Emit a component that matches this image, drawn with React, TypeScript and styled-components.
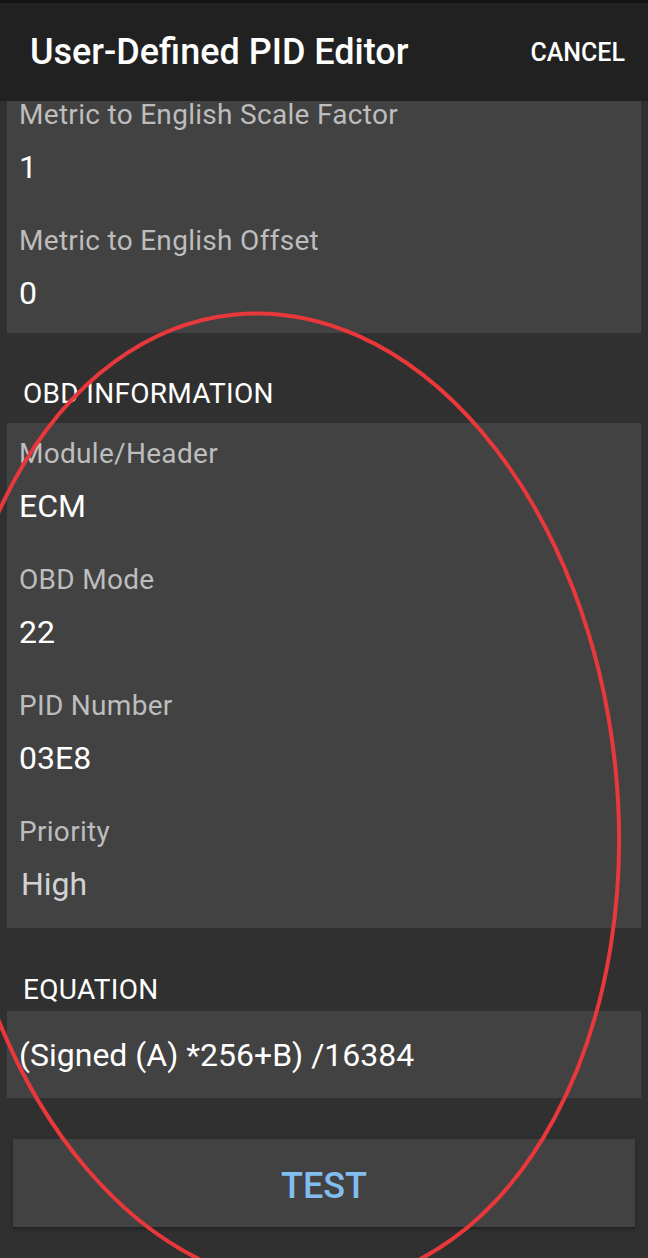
import React from 'react'
import styled, { createGlobalStyle } from 'styled-components'

const GlobalStyle = createGlobalStyle`
    * {
        box-sizing: border-box;
    }

    html, body {
        margin: 0;
        padding: 0;
        background: #303030;
    }

    body {
        font-family: Roboto, "Noto Sans", "Liberation Sans", sans-serif;
        -webkit-font-smoothing: antialiased;
    }
`

const Screen = styled.div`
    position: relative;
    width: 648px;
    height: 1258px;
    overflow: hidden;
    background: #303030;
`

const Toolbar = styled.header`
    height: 101px;
    border-top: 3px solid #131313;
    background: #212121;
    display: flex;
    align-items: center;
    justify-content: space-between;
    padding: 0 23px 0 30px;
`

const Title = styled.h1`
    margin: 0;
    font-size: 36px;
    font-weight: 500;
    color: #fff;
    line-height: normal;
`

const ActionButton = styled.button`
    border: none;
    background: none;
    padding: 0;
    font-family: inherit;
    font-size: 25px;
    font-weight: 500;
    color: #fff;
    line-height: normal;
`

const Content = styled.main`
    padding: 0 7px;
    display: flex;
    flex-direction: column;
`

const Card = styled.section<{ $top: number; $bottom: number }>`
    background: #424242;
    display: flex;
    flex-direction: column;
    gap: 43px;
    padding: ${p => p.$top}px 12px ${p => p.$bottom}px;
`

const Field = styled.div`
    display: flex;
    flex-direction: column;
`

const Label = styled.div`
    font-size: 28px;
    letter-spacing: 0.3px;
    line-height: 28px;
    color: #bdbdbd;
`

const Value = styled.div<{ $muted?: boolean; $gap?: number }>`
    margin-top: ${p => p.$gap ?? 22}px;
    padding-left: ${p => (p.$muted ? 2 : 0)}px;
    font-size: 32px;
    line-height: 33px;
    color: ${p => (p.$muted ? '#d2d2d2' : '#fff')};
`

const SectionTitle = styled.h2<{ $above: number; $below: number }>`
    margin: ${p => p.$above}px 0 ${p => p.$below}px;
    padding-left: 16px;
    font-size: 28px;
    letter-spacing: 0.3px;
    font-weight: 400;
    line-height: 28px;
    color: #fff;
`

const TestButton = styled.button`
    margin: 41px 6px 0;
    height: 88px;
    border: none;
    background: #424242;
    box-shadow: 0 2px 4px rgba(0, 0, 0, 0.35);
    padding-top: 6px;
    font-family: inherit;
    font-size: 36px;
    font-weight: 500;
    color: #82bdf0;
`

const Annotation = styled.svg`
    position: absolute;
    top: 0;
    left: 0;
    pointer-events: none;
`

type FieldData = {
    label: string
    value: string
    muted?: boolean
}

const conversion: FieldData[] = [
    { label: 'Metric to English Scale Factor', value: '1' },
    { label: 'Metric to English Offset', value: '0' },
]

const obd: FieldData[] = [
    { label: 'Module/Header', value: 'ECM' },
    { label: 'OBD Mode', value: '22' },
    { label: 'PID Number', value: '03E8' },
    { label: 'Priority', value: 'High', muted: true },
]

const FieldList: React.FC<{ items: FieldData[] }> = ({ items }) => (
    <>
        {items.map(item => (
            <Field key={item.label}>
                <Label>{item.label}</Label>
                <Value $muted={item.muted}>{item.value}</Value>
            </Field>
        ))}
    </>
)

const App: React.FC = () => (
    <Screen>
        <GlobalStyle />
        <Toolbar>
            <Title>User-Defined PID Editor</Title>
            <ActionButton>CANCEL</ActionButton>
        </Toolbar>

        <Content>
            <Card $top={0} $bottom={23}>
                <FieldList items={conversion} />
            </Card>

            <SectionTitle $above={47} $below={15}>OBD INFORMATION</SectionTitle>
            <Card $top={17} $bottom={27}>
                <FieldList items={obd} />
            </Card>

            <SectionTitle $above={48} $below={7}>EQUATION</SectionTitle>
            <Card $top={28} $bottom={26}>
                <Value $gap={0}>(Signed (A) *256+B) /16384</Value>
            </Card>

            <TestButton>TEST</TestButton>
        </Content>

        {/* red hand-drawn circle over the screenshot */}
        <Annotation width="648" height="1258" viewBox="0 0 648 1258">
            <ellipse
                cx="284"
                cy="800"
                rx="333"
                ry="488"
                transform="rotate(-6 284 800)"
                fill="none"
                stroke="#e8383b"
                strokeWidth="4"
            />
        </Annotation>
    </Screen>
)

export default App
